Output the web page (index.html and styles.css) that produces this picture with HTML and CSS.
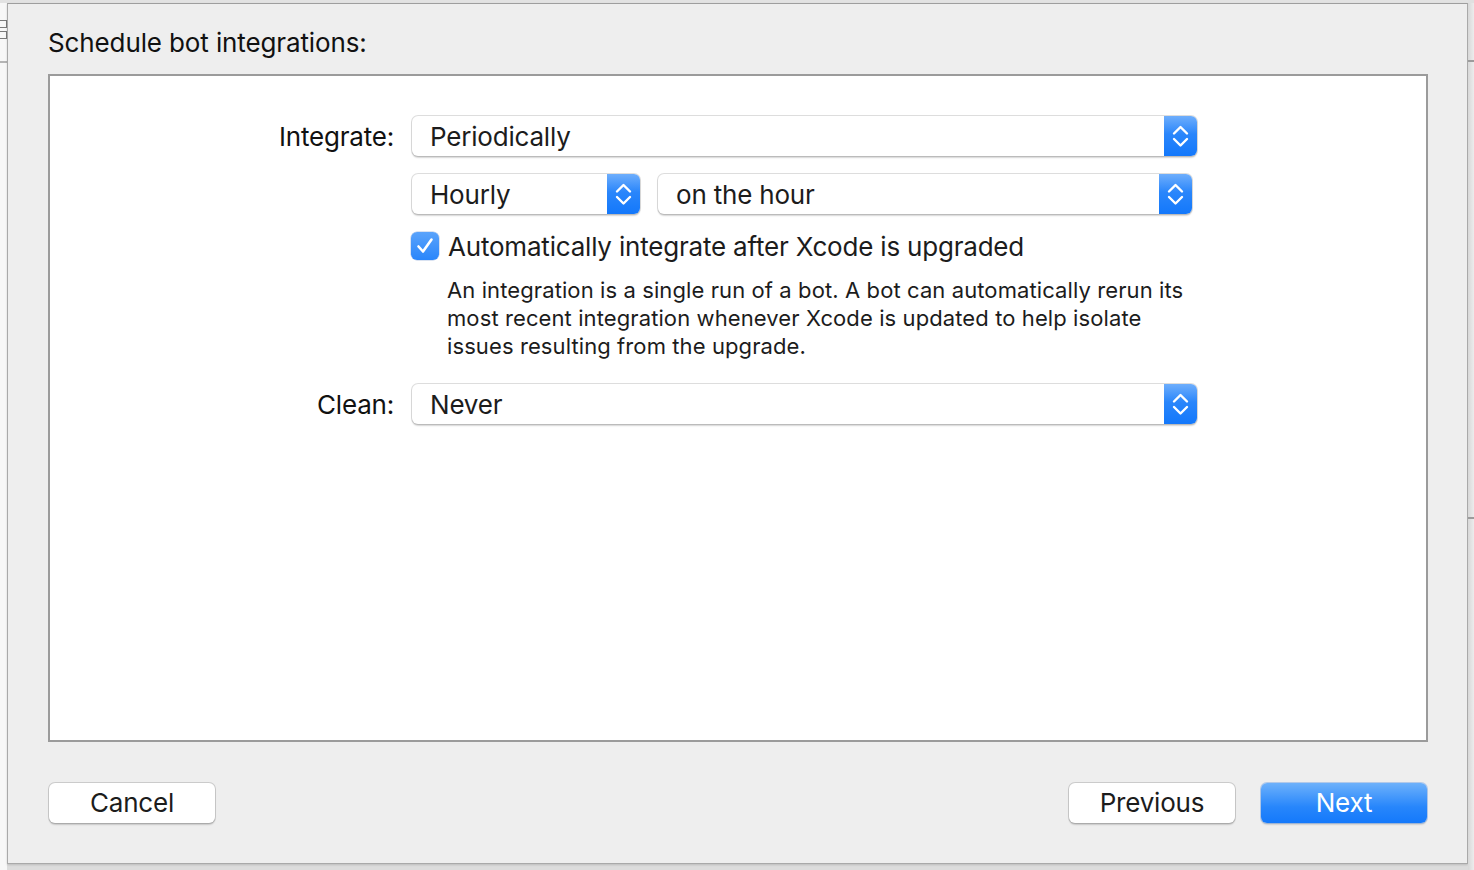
FILE: index.html
```html
<!DOCTYPE html>
<html>
<head>
<meta charset="utf-8">
<link rel="stylesheet" href="styles.css">
</head>
<body>
<div class="window">
  <div class="side side-left">
    <div class="mini-icon"><span></span><span></span></div>
    <div class="side-line side-line-left"></div>
  </div>
  <div class="sheet">
    <h1 class="title">Schedule bot integrations:</h1>
    <div class="panel">
      <div class="row row-first">
        <div class="label">Integrate:</div>
        <div class="popup popup-wide">
          <span class="popup-text">Periodically</span>
          <span class="stepper"><svg width="33" height="40" viewBox="0 0 33 40"><path d="M10 17.5 L16.5 11 L23 17.5 M10 23 L16.5 29.5 L23 23" fill="none" stroke="#fff" stroke-width="2.4" stroke-linecap="round" stroke-linejoin="round"/></svg></span>
        </div>
      </div>
      <div class="row row-gap">
        <div class="label"></div>
        <div class="popup popup-hourly">
          <span class="popup-text">Hourly</span>
          <span class="stepper"><svg width="33" height="40" viewBox="0 0 33 40"><path d="M10 17.5 L16.5 11 L23 17.5 M10 23 L16.5 29.5 L23 23" fill="none" stroke="#fff" stroke-width="2.4" stroke-linecap="round" stroke-linejoin="round"/></svg></span>
        </div>
        <div class="popup popup-hour">
          <span class="popup-text">on the hour</span>
          <span class="stepper"><svg width="33" height="40" viewBox="0 0 33 40"><path d="M10 17.5 L16.5 11 L23 17.5 M10 23 L16.5 29.5 L23 23" fill="none" stroke="#fff" stroke-width="2.4" stroke-linecap="round" stroke-linejoin="round"/></svg></span>
        </div>
      </div>
      <div class="row row-check">
        <div class="label"></div>
        <div class="check-wrap">
          <span class="checkbox"><svg width="28" height="28" viewBox="0 0 28 28"><path d="M7.5 14.5 L12 19.5 L20.5 7.5" fill="none" stroke="#fff" stroke-width="2.6" stroke-linecap="round" stroke-linejoin="round"/></svg></span>
          <span class="check-label">Automatically integrate after Xcode is upgraded</span>
        </div>
      </div>
      <div class="row row-desc">
        <div class="label"></div>
        <p class="desc">An integration is a single run of a bot. A bot can automatically rerun its most recent integration whenever Xcode is updated to help isolate issues resulting from the upgrade.</p>
      </div>
      <div class="row row-clean">
        <div class="label">Clean:</div>
        <div class="popup popup-wide">
          <span class="popup-text">Never</span>
          <span class="stepper"><svg width="33" height="40" viewBox="0 0 33 40"><path d="M10 17.5 L16.5 11 L23 17.5 M10 23 L16.5 29.5 L23 23" fill="none" stroke="#fff" stroke-width="2.4" stroke-linecap="round" stroke-linejoin="round"/></svg></span>
        </div>
      </div>
    </div>
    <div class="buttons">
      <button class="btn">Cancel</button>
      <div class="spacer"></div>
      <button class="btn">Previous</button>
      <button class="btn btn-primary">Next</button>
    </div>
  </div>
  <div class="side side-right">
    <div class="side-line side-line-r1"></div>
    <div class="side-line side-line-r2"></div>
  </div>
</div>
</body>
</html>
```

FILE: styles.css
```css
* { box-sizing: border-box; }
html, body { margin: 0; padding: 0; }
body {
  width: 1474px;
  height: 870px;
  overflow: hidden;
  background: #dadada;
  font-family: Inter, "Liberation Sans", sans-serif;
  color: #1c1c1c;
}
.window {
  display: flex;
  height: 870px;
  background: linear-gradient(#e2e2e2 0 3px, #dcdcdc 3px);
}
.side {
  flex: none;
  height: 870px;
}
.side-left {
  width: 7px;
  background: #f7f7f7;
  border-top: 3px solid #e2e2e2;
  padding-top: 17px;
}
.mini-icon {
  width: 7px;
  height: 24px;
  display: flex;
  flex-direction: column;
  gap: 3px;
}
.mini-icon span {
  display: block;
  width: 7px;
  height: 8px;
  border: 1px solid #7a7a7a;
  border-left: none;
}
.side-line {
  height: 2px;
  background: #b4b4b4;
}
.side-line-left {
  margin-top: 17px;
}
.side-right {
  width: 6px;
  background: linear-gradient(90deg, #d8d8d8, #ececec);
  border-top: 3px solid #e0e0e0;
  padding-top: 57px;
}
.side-line-r1 { background: #9c9c9c; }
.side-line-r2 { margin-top: 455px; background: #9c9c9c; }
.sheet {
  flex: none;
  width: 1461px;
  height: 861px;
  margin-top: 3px;
  background: #eeeeee;
  border: 1px solid #a9a9a9;
  border-top-color: #9e9e9e;
  padding: 23px 0 0 40px;
  display: flex;
  flex-direction: column;
  box-shadow: 0 1px 2px rgba(0,0,0,0.15);
}
.title {
  margin: 0;
  font-size: 26px;
  font-weight: 400;
  line-height: 32px;
  height: 32px;
  color: #111;
  letter-spacing: -0.12px;
}
.panel {
  margin-top: 15px;
  width: 1380px;
  height: 668px;
  background: #ffffff;
  border: 2px solid #9b9b9b;
  padding-top: 40px;
}
.row {
  display: flex;
  align-items: center;
}
.row-gap { margin-top: 18px; }
.row-check { margin-top: 18px; height: 28px; }
.row-desc { margin-top: 16px; align-items: flex-start; }
.row-clean { margin-top: 24px; }
.label {
  flex: none;
  width: 344px;
  height: 40px;
  margin-right: 18px;
  text-align: right;
  font-size: 26px;
  line-height: 40px;
  padding-top: 1px;
  letter-spacing: -0.2px;
  color: #111;
}
.row-check .label, .row-desc .label { height: 0; padding: 0; }
.popup {
  flex: none;
  height: 40px;
  display: flex;
  align-items: stretch;
  background: #ffffff;
  border-radius: 6px;
  box-shadow: 0 0 0 1px rgba(0,0,0,0.13), 0 1.5px 1.5px rgba(0,0,0,0.16);
  overflow: hidden;
}
.popup-wide { width: 785px; }
.popup-hourly { width: 228px; }
.popup-hour { width: 534px; margin-left: 18px; }
.popup-text {
  flex: 1;
  padding-left: 18px;
  padding-top: 1px;
  font-size: 26px;
  line-height: 40px;
  letter-spacing: -0.2px;
  color: #1c1c1c;
  white-space: nowrap;
}
.stepper {
  flex: none;
  width: 33px;
  height: 40px;
  background: linear-gradient(#6eaefc, #2a86fb 45%, #1378fb);
  display: block;
}
.stepper svg { display: block; }
.check-wrap {
  display: flex;
  align-items: center;
  height: 28px;
  margin-left: -1px;
}
.checkbox {
  flex: none;
  width: 28px;
  height: 28px;
  border-radius: 6px;
  background: linear-gradient(#5aa3fb, #2a86fb);
  box-shadow: 0 0 0 0.5px rgba(0,60,160,0.3);
  display: block;
}
.checkbox svg { display: block; }
.check-label {
  margin-left: 9px;
  height: 28px;
  padding-top: 1px;
  font-size: 26px;
  line-height: 28px;
  letter-spacing: -0.2px;
  color: #1c1c1c;
  white-space: nowrap;
}
.desc {
  margin: 0 0 0 35px;
  width: 745px;
  font-size: 22px;
  line-height: 28px;
  letter-spacing: 0.1px;
  color: #1c1c1c;
}
.buttons {
  display: flex;
  margin-top: 41px;
  margin-left: 1px;
  width: 1378px;
}
.spacer { flex: 1; }
.btn {
  flex: none;
  width: 166px;
  height: 40px;
  margin: 0;
  padding: 0;
  font-family: Inter, "Liberation Sans", sans-serif;
  font-size: 26px;
  line-height: 40px;
  letter-spacing: -0.2px;
  color: #1c1c1c;
  background: #ffffff;
  border: none;
  border-radius: 6px;
  box-shadow: 0 0 0 1px rgba(0,0,0,0.14), 0 1.5px 1.5px rgba(0,0,0,0.16);
}
.btn-primary {
  margin-left: 26px;
  color: #ffffff;
  background: linear-gradient(#6db1fb, #2786fb 60%, #1479fb);
  box-shadow: 0 0 0 1px rgba(0,90,220,0.25), 0 1.5px 1.5px rgba(0,0,0,0.12);
}
```
